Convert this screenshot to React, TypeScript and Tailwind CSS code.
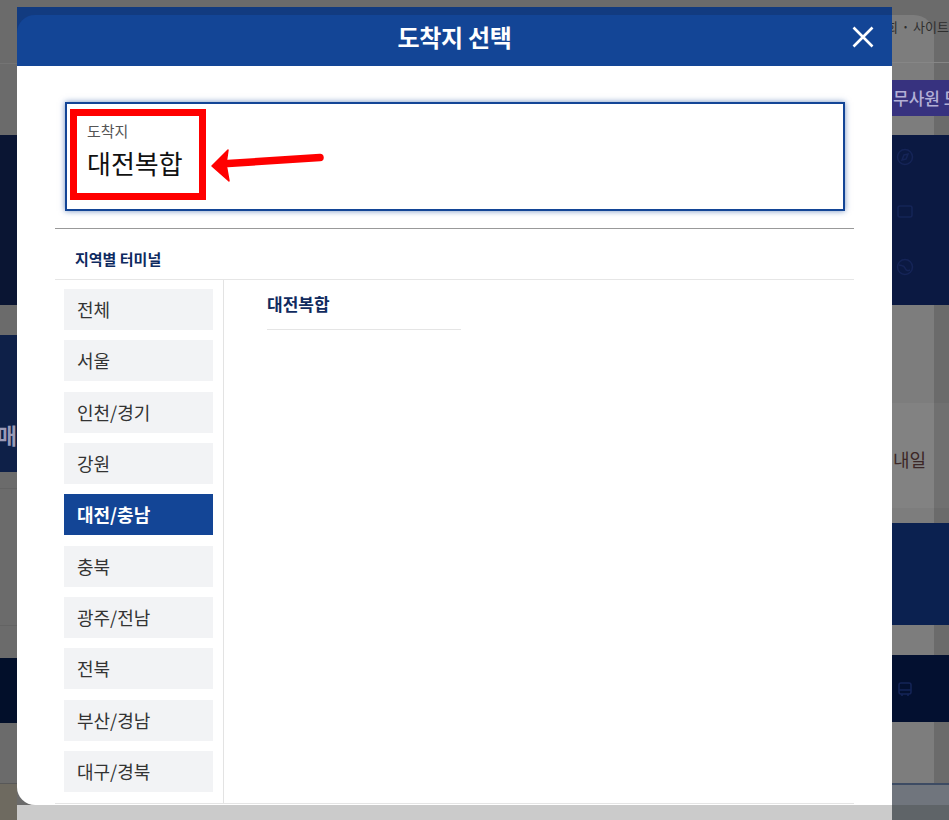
import React from "react";

const regions = [
  "전체",
  "서울",
  "인천/경기",
  "강원",
  "대전/충남",
  "충북",
  "광주/전남",
  "전북",
  "부산/경남",
  "대구/경북",
];

function FaintIcon({ kind }: { kind: "compass" | "screen" | "globe" | "bus" }) {
  return (
    <svg width="18" height="18" viewBox="0 0 18 18" fill="none" stroke="#152457" strokeWidth="1.5">
      {kind === "compass" && (
        <>
          <circle cx="9" cy="9" r="7.5" />
          <path d="M6 12l2-5 4-1-2 5z" />
        </>
      )}
      {kind === "screen" && <rect x="2" y="3" width="14" height="11" rx="2" />}
      {kind === "globe" && (
        <>
          <circle cx="9" cy="9" r="7.5" />
          <path d="M3 7c3 1 5 0 6 3s3 3 5 2" />
        </>
      )}
      {kind === "bus" && (
        <>
          <rect x="3" y="3" width="12" height="11" rx="2" />
          <path d="M3 10h12M6 14v2M12 14v2" />
        </>
      )}
    </svg>
  );
}

function LeftStrip() {
  return (
    <div className="w-[17px] shrink-0 flex flex-col">
      <div className="h-[63px]" />
      <div className="h-px bg-[#747474]" />
      <div className="h-[71px]" />
      <div className="h-[170px] bg-[#0a1533]" />
      <div className="h-[30px]" />
      <div className="h-[137px] bg-[#0e2048] flex justify-end items-start overflow-hidden pt-[86px]">
        <span className="text-[22px] leading-[26px] font-bold text-[#9a9ab6] whitespace-nowrap">판매</span>
      </div>
      <div className="h-[16px]" />
      <div className="h-px bg-[#636363]" />
      <div className="h-[136px]" />
      <div className="h-px bg-[#636363]" />
      <div className="h-[32px]" />
      <div className="h-[65px] bg-[#020f2a]" />
      <div className="h-[60px]" />
      <div className="h-px bg-[#585858]" />
      <div className="flex-1 bg-[#6e6a60]" />
    </div>
  );
}

function RightStrip() {
  return (
    <div className="w-[57px] shrink-0 flex flex-col overflow-hidden">
      <div className="h-[62px] pt-[18px] overflow-hidden">
        <div className="-ml-[6px] flex items-center text-[13px] leading-[18px] text-[#2e2e2e] whitespace-nowrap">
          <span>회</span>
          <span className="mx-[6px] text-[9px]">•</span>
          <span>사이트맵</span>
        </div>
      </div>
      <div className="h-px bg-[#868686]" />
      <div className="h-[17px]" />
      <div className="h-[36px] bg-[#37327f] flex items-center overflow-hidden">
        <span className="ml-[1px] text-[17px] font-medium text-[#b3b0d6] whitespace-nowrap">무사원 모드</span>
      </div>
      <div className="h-[19px]" />
      <div className="h-[170px] bg-[#0b1942] flex flex-col pl-[4px] pt-[13px] gap-[37px]">
        <FaintIcon kind="compass" />
        <FaintIcon kind="screen" />
        <FaintIcon kind="globe" />
      </div>
      <div className="h-[98px]" />
      <div className="h-[105px] bg-white/[0.04] pt-[44px] overflow-hidden">
        <span className="ml-[1px] text-[18px] leading-[24px] text-[#3c2727] whitespace-nowrap">내일</span>
      </div>
      <div className="h-[15px]" />
      <div className="h-[102px] bg-[#0b2150]" />
      <div className="h-[30px]" />
      <div className="h-[67px] bg-[#031030] flex items-center pl-[4px]">
        <FaintIcon kind="bus" />
      </div>
      <div className="h-[61px]" />
      <div className="h-[2px] bg-[#3d4b63]" />
      <div className="h-[20px] bg-[#70757d]" />
      <div className="flex-1 bg-[#5f6468]" />
    </div>
  );
}

export default function App() {
  return (
    <div className="relative w-[949px] h-[820px] overflow-hidden bg-[#6b6b6b] font-['Noto_Sans_CJK_KR','Noto_Sans',sans-serif]">
      {/* dimmed background page panel */}
      <div className="absolute left-[17px] top-[15px] w-[917px] h-[790px] rounded-[20px] bg-[#7d7d7d]" />

      {/* dimmed background page edges */}
      <div className="relative flex h-full">
        <LeftStrip />
        <div className="flex-1 flex flex-col">
          <div className="flex-1" />
          <div className="h-[15px] bg-[#cbcbcb]" />
        </div>
        <RightStrip />
      </div>

      {/* modal */}
      <div className="absolute left-[17px] top-[7px] w-[875px] h-[798px] bg-white rounded-bl-[18px] flex flex-col overflow-hidden">
        <div className="h-[59px] shrink-0 bg-[#123b80] flex flex-col">
          <div className="mt-[8px] flex-1 bg-[#134596] rounded-tl-[18px] grid grid-cols-[22px_1fr_22px] items-center px-[18px] pb-[8px]">
            <div />
            <h1 className="text-center text-white text-[24px] leading-[30px] font-semibold tracking-[-0.3px]">도착지 선택</h1>
            <svg width="22" height="22" viewBox="0 0 22 22" fill="none">
              <path d="M1.5 1.5L20.5 20.5M20.5 1.5L1.5 20.5" stroke="white" strokeWidth="2.6" />
            </svg>
          </div>
        </div>

        <div className="flex-1 flex flex-col px-[38px] pt-[36px]">
          <div className="ml-[10px] mr-[9px] h-[109px] shrink-0 border-2 border-[#134596] shadow-[0_0_6px_rgba(19,69,150,0.6)] flex items-start pl-[3px] pt-[5px]">
            <div className="w-[136px] h-[91px] border-[7px] border-[#ff0000] pl-[10px] pt-[5px] flex flex-col">
              <span className="text-[15px] leading-[20px] text-[#555555]">도착지</span>
              <span className="mt-[6px] text-[26px] leading-[32px] text-[#111111] whitespace-nowrap">대전복합</span>
            </div>
            <svg className="mt-[36px] shrink-0" width="124" height="44" viewBox="0 0 124 44" fill="none">
              <path d="M22 18.5L114 12.5" stroke="#ff0000" strokeWidth="7.5" strokeLinecap="round" />
              <polygon points="6,21 22,5 20,19 23,36" fill="#ff0000" stroke="#ff0000" strokeWidth="1.5" strokeLinejoin="round" />
            </svg>
          </div>

          <div className="mt-[17px] border-t border-[#999999]" />
          <div className="h-[50px] shrink-0 pl-[20px] pt-[10px] flex items-center text-[15px] font-bold text-[#0e2a5f]">
            지역별 터미널
          </div>

          <div className="flex-1 flex border-t border-[#e6e6e6]">
            <div className="w-[169px] shrink-0 border-r border-[#e3e3e3] pl-[9px] pr-[10px] pt-[9px] flex flex-col gap-[10.33px]">
              {regions.map((r) => {
                const active = r === "대전/충남";
                return (
                  <div
                    key={r}
                    className={
                      active
                        ? "h-[41px] flex items-center pl-[13px] bg-[#134596] text-white text-[18px] font-bold"
                        : "h-[41px] flex items-center pl-[13px] bg-[#f2f3f5] text-[#333333] text-[18px]"
                    }
                  >
                    {r}
                  </div>
                );
              })}
            </div>
            <div className="flex-1 pl-[43px] pt-[12px]">
              <div className="w-[194px] pb-[13px] border-b border-[#e5e5e5] text-[17px] leading-[24px] font-bold text-[#102b5e]">
                대전복합
              </div>
            </div>
          </div>
          <div className="border-t border-[#e5e5e5] mb-[1px]" />
        </div>
      </div>
    </div>
  );
}
